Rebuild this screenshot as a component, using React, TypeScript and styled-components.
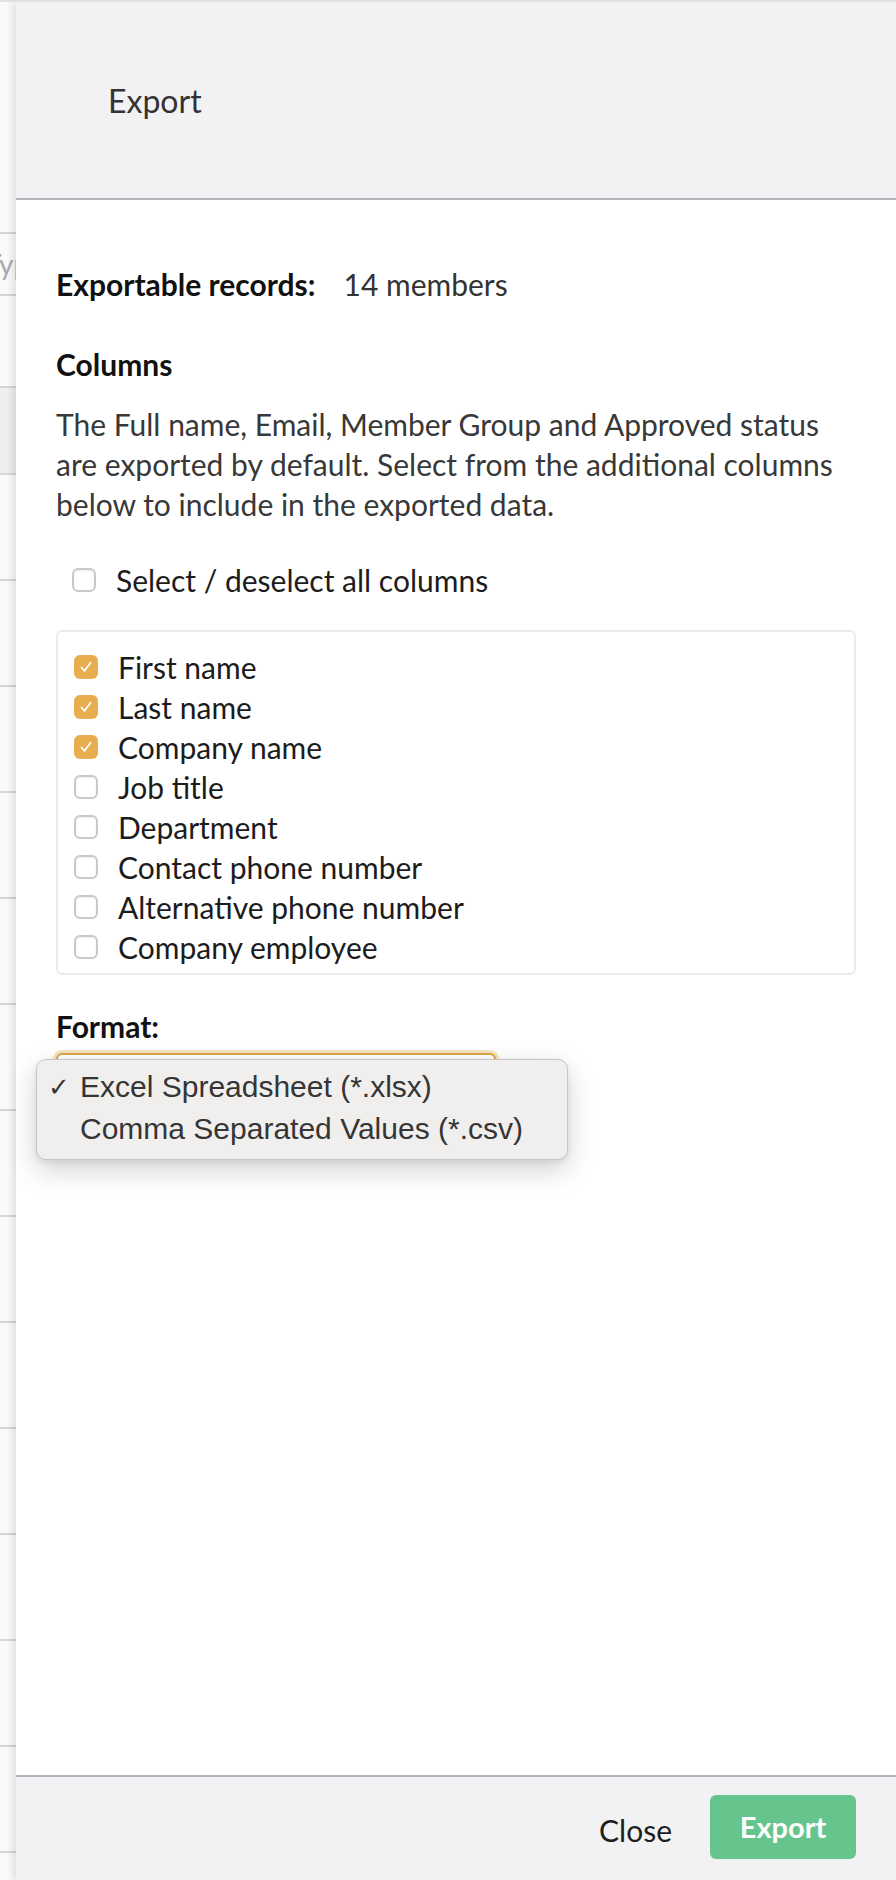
import React from "react";
import styled, { createGlobalStyle } from "styled-components";

const Global = createGlobalStyle`
  html, body { margin: 0; padding: 0; background: #fafafa; }
  body { font-family: Lato, "Open Sans", sans-serif; }
  * { box-sizing: border-box; }
`;

const Page = styled.div`
  display: flex;
  width: 896px;
  height: 1880px;
  border-top: 2px solid #e1e1e3;
  overflow: hidden;
`;

const Backdrop = styled.div`
  width: 16px;
  flex: none;
  display: flex;
  flex-direction: column;
  overflow: hidden;
  background: #fafafa;
`;

const BackRow = styled.div<{ $h: number; $shade?: boolean; $line?: boolean }>`
  height: ${(p) => p.$h}px;
  flex: none;
  background: ${(p) => (p.$shade ? "#efeff1" : "transparent")};
  border-top: ${(p) => (p.$line ? "2px solid #d6d6d8" : "none")};
  display: flex;
  align-items: center;
  white-space: nowrap;
`;

const GhostText = styled.span`
  font-size: 28px;
  color: #a9a9ad;
  margin-left: -15px;
`;

const Panel = styled.div`
  flex: 1;
  display: flex;
  flex-direction: column;
  background: #fff;
  box-shadow: -3px 0 8px rgba(0, 0, 0, 0.12);
  position: relative;
`;

const Header = styled.header`
  height: 198px;
  flex: none;
  background: #f2f2f4;
  border-bottom: 2px solid #b3b2ba;
  display: flex;
  align-items: center;
  padding-left: 92px;
`;

const Title = styled.h1`
  margin: 0;
  font-weight: 400;
  font-size: 32px;
  color: #333;
`;

const Body = styled.main`
  flex: 1;
  padding: 64px 40px 0 40px;
  font-size: 30px;
  line-height: 40px;
  color: #333;
`;

const InfoRow = styled.div`
  display: flex;
  gap: 28px;
`;

const Strong = styled.span`
  font-weight: 700;
  color: #111;
`;

const SectionTitle = styled.h2<{ $mt: number }>`
  margin: ${(p) => p.$mt}px 0 0;
  font-size: 30px;
  line-height: 40px;
  font-weight: 700;
  color: #111;
`;

const Paragraph = styled.p`
  margin: 20px 0 0;
  color: #383838;
`;

const CheckRow = styled.label<{ $indent: number }>`
  display: flex;
  align-items: center;
  gap: 20px;
  height: 40px;
  padding-left: ${(p) => p.$indent}px;
  color: #1c1c1c;
`;

const Box = styled.span<{ $on: boolean }>`
  width: 24px;
  height: 24px;
  flex: none;
  border-radius: 6px;
  display: flex;
  align-items: center;
  justify-content: center;
  background: ${(p) => (p.$on ? "#e8ad4f" : "#fff")};
  border: ${(p) => (p.$on ? "none" : "2px solid #c9c9cb")};
  box-shadow: ${(p) => (p.$on ? "none" : "inset 0 1px 2px rgba(0,0,0,0.08)")};
`;

const SelectAllWrap = styled.div`
  margin-top: 36px;
`;

const ListBox = styled.div`
  margin-top: 30px;
  border: 2px solid #ebebeb;
  border-radius: 6px;
  padding: 15px 16px 6px;
  display: flex;
  flex-direction: column;
`;

const FormatField = styled.div`
  position: relative;
  margin-top: 7px;
`;

const SelectBox = styled.div`
  width: 440px;
  height: 64px;
  border: 2px solid #dca648;
  border-radius: 6px;
  box-shadow: 0 0 0 3px rgba(236, 190, 110, 0.45);
  background: #fff;
`;

const Menu = styled.div`
  position: absolute;
  left: -20px;
  top: 6px;
  width: 532px;
  padding: 6px 0 9px;
  background: #f0efed;
  border: 1px solid #c6c6c6;
  border-radius: 10px;
  box-shadow: 0 10px 28px rgba(0, 0, 0, 0.18), 0 2px 6px rgba(0, 0, 0, 0.08);
  font-family: "Liberation Sans", Arial, sans-serif;
  font-size: 30px;
  line-height: 42px;
  color: #353535;
`;

const MenuItem = styled.div`
  display: flex;
  align-items: center;
`;

const MenuCheck = styled.span`
  width: 43px;
  flex: none;
  padding-left: 11px;
  font-size: 26px;
  color: #353535;
`;

const Footer = styled.footer`
  height: 105px;
  flex: none;
  background: #f2f2f4;
  border-top: 2px solid #b3b2ba;
  display: flex;
  align-items: center;
  justify-content: flex-end;
  gap: 38px;
  padding: 0 40px 4px 0;
`;

const TextButton = styled.button`
  border: none;
  background: transparent;
  font-family: Lato, sans-serif;
  font-size: 30px;
  color: #1e1e1e;
  padding: 0;
  margin-top: 6px;
`;

const PrimaryButton = styled.button`
  width: 146px;
  height: 64px;
  border: none;
  border-radius: 6px;
  background: #66c58d;
  color: #fff;
  font-family: Lato, sans-serif;
  font-weight: 700;
  font-size: 29px;
`;

const Tick = () => (
  <svg width="14" height="14" viewBox="0 0 14 14">
    <path d="M2.5 7.5 L5.6 10.8 L11.5 2.8" fill="none" stroke="#fff" strokeWidth="1.8" strokeLinecap="round" strokeLinejoin="round" />
  </svg>
);

const columns: [string, boolean][] = [
  ["First name", true],
  ["Last name", true],
  ["Company name", true],
  ["Job title", false],
  ["Department", false],
  ["Contact phone number", false],
  ["Alternative phone number", false],
  ["Company employee", false],
];

export default function App() {
  const rows = Array.from({ length: 14 });
  return (
    <>
      <Global />
      <Page>
        <Backdrop>
          <BackRow $h={230} />
          <BackRow $h={62} $line>
            <GhostText>Type</GhostText>
          </BackRow>
          <BackRow $h={92} $line />
          <BackRow $h={87} $line $shade />
          {rows.map((_, i) => (
            <BackRow key={i} $h={106} $line />
          ))}
        </Backdrop>
        <Panel>
          <Header>
            <Title>Export</Title>
          </Header>
          <Body>
            <InfoRow>
              <Strong>Exportable records:</Strong>
              <span>14 members</span>
            </InfoRow>
            <SectionTitle $mt={40}>Columns</SectionTitle>
            <Paragraph>
              The Full name, Email, Member Group and Approved status are exported by default. Select from the additional
              columns below to include in the exported data.
            </Paragraph>
            <SelectAllWrap>
              <CheckRow $indent={16}>
                <Box $on={false} />
                Select / deselect all columns
              </CheckRow>
            </SelectAllWrap>
            <ListBox>
              {columns.map(([name, on]) => (
                <CheckRow key={name} $indent={0}>
                  <Box $on={on}>{on && <Tick />}</Box>
                  {name}
                </CheckRow>
              ))}
            </ListBox>
            <SectionTitle $mt={31}>Format:</SectionTitle>
            <FormatField>
              <SelectBox />
              <Menu>
                <MenuItem>
                  <MenuCheck>✓</MenuCheck>
                  Excel Spreadsheet (*.xlsx)
                </MenuItem>
                <MenuItem>
                  <MenuCheck />
                  Comma Separated Values (*.csv)
                </MenuItem>
              </Menu>
            </FormatField>
          </Body>
          <Footer>
            <TextButton>Close</TextButton>
            <PrimaryButton>Export</PrimaryButton>
          </Footer>
        </Panel>
      </Page>
    </>
  );
}
